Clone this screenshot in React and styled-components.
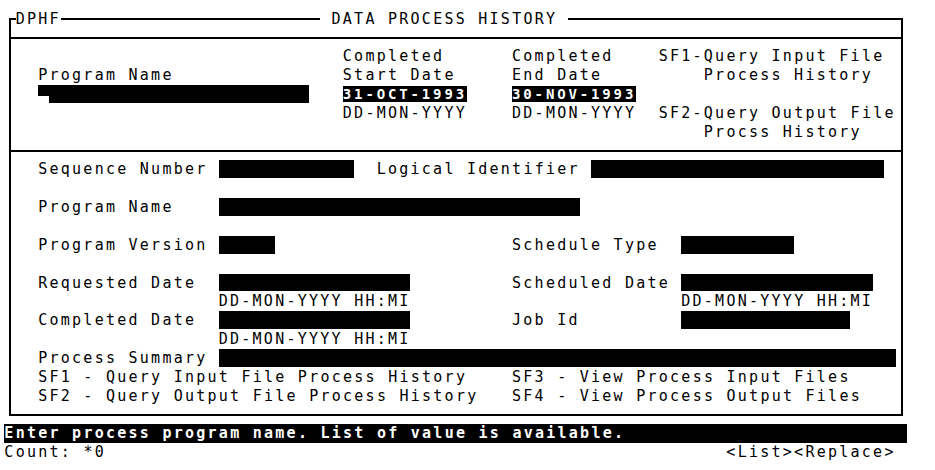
import React from "react";
import styled, { createGlobalStyle } from "styled-components";

// one character cell of the terminal screen
const W = 11.29;
const H = 18.86;
const HALF = H / 2 - 1;
const FONT = 15;

const GlobalStyle = createGlobalStyle`
  html, body {
    margin: 0;
    padding: 0;
    background: #fff;
  }
`;

const Screen = styled.div`
  box-sizing: border-box;
  width: 935px;
  height: 470px;
  padding: ${H / 2 + 0.14}px 0 0 4.36px;
  background: #fff;
  color: #000;
  font-family: "DejaVu Sans Mono", "Liberation Mono", monospace;
  font-size: ${FONT}px;
  letter-spacing: ${W - 0.6021 * FONT}px;
  overflow: hidden;
`;

const Frame = styled.div`
  box-sizing: border-box;
  width: ${79 * W + 2}px;
  margin: ${HALF}px 0 ${HALF}px ${W / 2 - 1}px;
  padding: 0 ${W / 2 - 1}px;
  border: 2px solid #000;
`;

const Grid = styled.div`
  display: grid;
  grid-template-columns: repeat(${(p) => p.$cols || 78}, ${W}px);
  grid-template-rows: repeat(${(p) => p.$rows}, ${H}px);
`;

const TitleRow = styled(Grid)`
  margin-top: -${H / 2 + 1}px;
`;

const Divider = styled.div`
  height: ${HALF}px;
  margin: 0 -${W / 2 - 1}px;
  border-bottom: 2px solid #000;
`;

const Section = styled.div`
  padding: ${HALF}px 0;
  margin: 0 -${W / 2 - 1}px;
  padding-left: ${W / 2 - 1}px;
  border-bottom: ${(p) => (p.$last ? "none" : "2px solid #000")};
`;

const Text = styled.span`
  grid-column: ${(p) => p.$c} / span ${(p) => p.$n};
  grid-row: ${(p) => p.$r};
  white-space: pre;
  line-height: ${H}px;
  background: ${(p) => (p.$mask ? "#fff" : "transparent")};
`;

const DateValue = styled(Text)`
  align-self: center;
  height: 16px;
  font-size: 14px;
  letter-spacing: ${W - 0.6021 * 14}px;
  line-height: 16px;
  background: #000;
  color: #fff;
  font-weight: bold;
`;

const Field = styled.span`
  grid-column: ${(p) => p.$c} / span ${(p) => p.$n};
  grid-row: ${(p) => p.$r};
  margin-bottom: 1px;
  background: ${(p) =>
    p.$cursor
      ? `linear-gradient(#fff, #fff) 0 100% / ${W}px 7px no-repeat, #000`
      : "#000"};
`;

const MessageBar = styled(Text)`
  background: #000;
  color: #fff;
  font-weight: bold;
`;

const T = ({ c, r, mask, children }) => (
  <Text $c={c} $r={r} $n={children.length} $mask={mask}>
    {children}
  </Text>
);

const Hint = ({ c, r }) => <T c={c} r={r}>DD-MON-YYYY HH:MI</T>;

export default function App() {
  return (
    <Screen>
      <GlobalStyle />
      <Frame>
        <TitleRow $rows={1}>
          <T c={1} r={1} mask>DPHF</T>
          <T c={28} r={1} mask>{" DATA PROCESS HISTORY "}</T>
        </TitleRow>
        <Divider />

        <Section>
          <Grid $rows={5}>
            <T c={30} r={1}>Completed</T>
            <T c={45} r={1}>Completed</T>
            <T c={58} r={1}>SF1-Query Input File</T>

            <T c={3} r={2}>Program Name</T>
            <T c={30} r={2}>Start Date</T>
            <T c={45} r={2}>End Date</T>
            <T c={62} r={2}>Process History</T>

            <Field $c={3} $r={3} $n={24} $cursor />
            <DateValue $c={30} $r={3} $n={11}>31-OCT-1993</DateValue>
            <DateValue $c={45} $r={3} $n={11}>30-NOV-1993</DateValue>

            <T c={30} r={4}>DD-MON-YYYY</T>
            <T c={45} r={4}>DD-MON-YYYY</T>
            <T c={58} r={4}>SF2-Query Output File</T>

            <T c={62} r={5}>Procss History</T>
          </Grid>
        </Section>

        <Section $last>
          <Grid $rows={13}>
            <T c={3} r={1}>Sequence Number</T>
            <Field $c={19} $r={1} $n={12} />
            <T c={33} r={1}>Logical Identifier</T>
            <Field $c={52} $r={1} $n={26} />

            <T c={3} r={3}>Program Name</T>
            <Field $c={19} $r={3} $n={32} />

            <T c={3} r={5}>Program Version</T>
            <Field $c={19} $r={5} $n={5} />
            <T c={45} r={5}>Schedule Type</T>
            <Field $c={60} $r={5} $n={10} />

            <T c={3} r={7}>Requested Date</T>
            <Field $c={19} $r={7} $n={17} />
            <T c={45} r={7}>Scheduled Date</T>
            <Field $c={60} $r={7} $n={17} />
            <Hint c={19} r={8} />
            <Hint c={60} r={8} />

            <T c={3} r={9}>Completed Date</T>
            <Field $c={19} $r={9} $n={17} />
            <T c={45} r={9}>Job Id</T>
            <Field $c={60} $r={9} $n={15} />
            <Hint c={19} r={10} />

            <T c={3} r={11}>Process Summary</T>
            <Field $c={19} $r={11} $n={60} />

            <T c={3} r={12}>SF1 - Query Input File Process History</T>
            <T c={45} r={12}>SF3 - View Process Input Files</T>
            <T c={3} r={13}>SF2 - Query Output File Process History</T>
            <T c={45} r={13}>SF4 - View Process Output Files</T>
          </Grid>
        </Section>
      </Frame>

      <Grid $cols={80} $rows={2}>
        <MessageBar $c={1} $r={1} $n={80}>
          Enter process program name. List of value is available.
        </MessageBar>
        <T c={1} r={2}>Count: *0</T>
        <T c={65} r={2}>{"<List><Replace>"}</T>
      </Grid>
    </Screen>
  );
}
